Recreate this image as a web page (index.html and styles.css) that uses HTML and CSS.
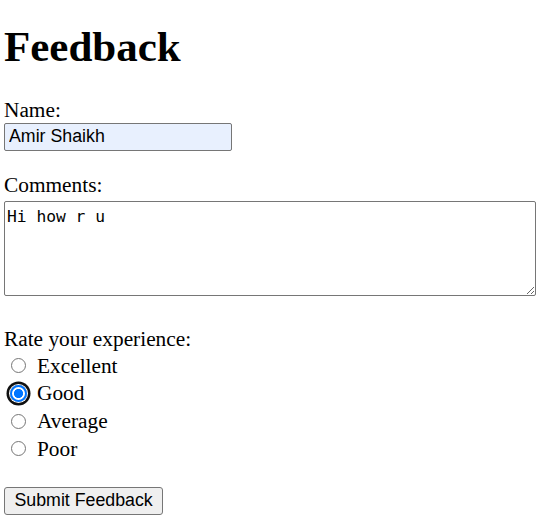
FILE: index.html
```html
<!DOCTYPE html>
<html lang="en">
<head>
<meta charset="utf-8">
<title>Feedback</title>
<link rel="stylesheet" href="styles.css">
</head>
<body>
<h1 class="title">Feedback</h1>
<form class="form">
  <label class="label label-name" for="name">Name:</label>
  <input class="text-input" id="name" type="text" value="Amir Shaikh">
  <label class="label label-comments" for="comments">Comments:</label>
  <textarea class="comments" id="comments">Hi how r u</textarea>
  <div class="label label-rate">Rate your experience:</div>
  <div class="options">
    <label class="option"><input class="radio" type="radio" name="rate" value="excellent"><span>Excellent</span></label>
    <label class="option"><input class="radio radio-focus" type="radio" name="rate" value="good" checked><span>Good</span></label>
    <label class="option"><input class="radio" type="radio" name="rate" value="average"><span>Average</span></label>
    <label class="option"><input class="radio" type="radio" name="rate" value="poor"><span>Poor</span></label>
  </div>
  <button class="submit" type="button">Submit Feedback</button>
</form>
</body>
</html>
```
FILE: styles.css
```css
html, body {
  margin: 0;
  padding: 0;
  background: #fff;
}
body {
  padding: 0 4px;
  font-family: "Liberation Serif", "Times New Roman", serif;
  font-size: 21.33px;
  color: #000;
}
.title {
  margin: 21.5px 0 0;
  font-size: 43px;
  line-height: 49px;
  font-weight: bold;
}
.form {
  display: flex;
  flex-direction: column;
  align-items: flex-start;
}
.label {
  display: block;
  line-height: 24.5px;
}
.label-name { margin-top: 27.5px; }
.label-comments { margin-top: 22.5px; }
.label-rate { margin-top: 31.2px; }
.text-input {
  box-sizing: border-box;
  width: 228px;
  height: 28px;
  margin: 0;
  padding: 0 4px;
  border: 1px solid #767676;
  border-radius: 2px;
  background: #e8f0fe;
  font-family: "Liberation Sans", Arial, sans-serif;
  font-size: 17.78px;
  color: #000;
}
.comments {
  box-sizing: border-box;
  width: 532px;
  height: 95px;
  margin: 3px 0 0;
  padding: 5px 2px 4px;
  border: 1px solid #767676;
  border-radius: 2px;
  font-family: "DejaVu Sans Mono", "Liberation Mono", monospace;
  font-size: 16.3px;
  color: #000;
  background: #fff;
}
.options {
  display: flex;
  flex-direction: column;
  margin-top: 1px;
}
.option {
  display: flex;
  align-items: center;
  height: 27.6px;
  line-height: 24.5px;
}
.radio {
  appearance: none;
  -webkit-appearance: none;
  box-sizing: border-box;
  width: 15px;
  height: 15px;
  margin: 0 11px 0 7px;
  border: 1px solid #767676;
  border-radius: 50%;
  background: #fff;
}
.radio:checked {
  width: 17px;
  height: 17px;
  margin: 0 10px 0 6px;
  border: 2px solid #0075ff;
  background: radial-gradient(circle, #0075ff 0 4.3px, #fff 4.8px);
}
.radio-focus {
  box-shadow: 0 0 0 1px #fff, 0 0 0 3.5px #101010;
}
.submit {
  box-sizing: border-box;
  height: 28px;
  margin-top: 24px;
  padding: 0 9.5px;
  border: 1px solid #767676;
  border-radius: 3px;
  background: #efefef;
  font-family: "Liberation Sans", Arial, sans-serif;
  font-size: 17.78px;
  color: #000;
}
```
